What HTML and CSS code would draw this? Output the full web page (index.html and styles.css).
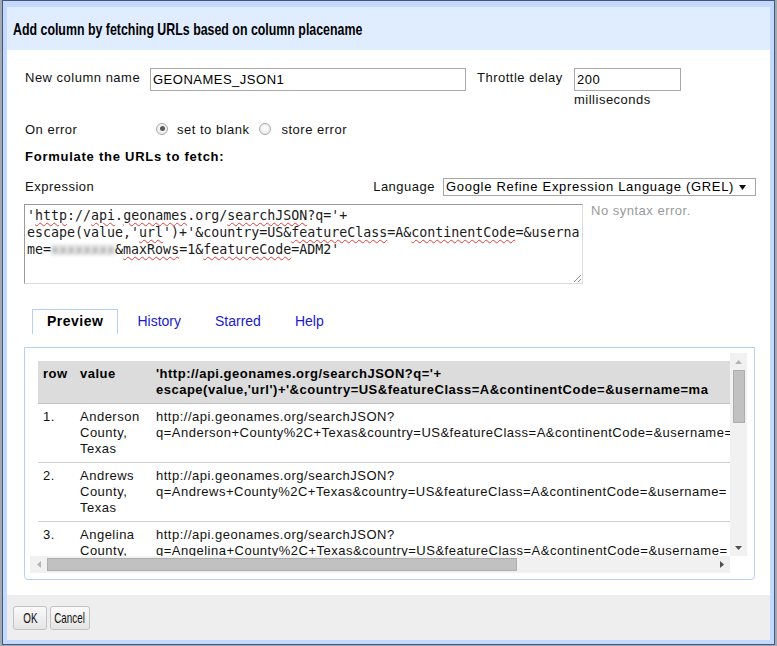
FILE: index.html
```html
<!DOCTYPE html>
<html>
<head>
<meta charset="utf-8">
<title>Add column by fetching URLs</title>
<link rel="stylesheet" href="styles.css">
</head>
<body>
<div class="dialog">
  <div class="dlg-header"><span class="dlg-title">Add column by fetching URLs based on column placename</span></div>
  <div class="dlg-body">
    <div class="row row-name">
      <label class="lbl lbl-name">New column name</label>
      <input class="txt txt-name" value="GEONAMES_JSON1">
      <label class="lbl lbl-throttle">Throttle delay</label>
      <div class="throttle">
        <input class="txt txt-throttle" value="200">
        <div class="ms">milliseconds</div>
      </div>
    </div>
    <div class="row row-error">
      <span class="lbl lbl-error">On error</span>
      <span class="radio checked"></span><span class="radio-lbl">set to blank</span>
      <span class="radio radio-2"></span><span class="radio-lbl radio-lbl-2">store error</span>
    </div>
    <div class="row heading">Formulate the URLs to fetch:</div>
    <div class="row row-lang">
      <span class="lbl">Expression</span>
      <div class="lang">
        <span class="lbl lbl-lang">Language</span>
        <div class="select"><span>Google Refine Expression Language (GREL)</span><svg class="sel-arrow" width="7" height="5" viewBox="0 0 7 5"><polygon points="0,0 7,0 3.5,5" fill="#111"/></svg></div>
      </div>
    </div>
    <div class="row-expr">
      <div class="expr"><div class="expr-line">'<span class="sp">http</span>://<span class="sp">api</span>.<span class="sp">geonames</span>.org/<span class="sp">searchJSON</span>?q='+</div><div class="expr-line">escape(value,'<span class="sp">url</span>')+'&amp;country=US&amp;<span class="sp">featureClass</span>=A&amp;<span class="sp">continentCode</span>=&amp;userna</div><div class="expr-line">me=<span class="blur">xxxxxxxx</span>&amp;<span class="sp">maxRows</span>=1&amp;<span class="sp">featureCode</span>=ADM2'</div><svg class="grip" width="10" height="10" viewBox="0 0 10 10"><path d="M9 2L2 9M9 6L6 9" stroke="#909090" stroke-width="1" fill="none"/></svg></div>
      <div class="status">No syntax error.</div>
    </div>
    <div class="tabs">
      <span class="tab active">Preview</span>
      <span class="tab">History</span>
      <span class="tab">Starred</span>
      <span class="tab">Help</span>
    </div>
    <div class="panel">
      <div class="scroller">
        <div class="viewport">
          <table class="grid">
            <thead>
              <tr><th class="c-row">row</th><th class="c-val">value</th><th class="c-expr">'http://api.geonames.org/searchJSON?q='+<br>escape(value,'url')+'&amp;country=US&amp;featureClass=A&amp;continentCode=&amp;username=ma</th></tr>
            </thead>
            <tbody>
              <tr><td>1.</td><td>Anderson<br>County,<br>Texas</td><td>http://api.geonames.org/searchJSON?<br>q=Anderson+County%2C+Texas&amp;country=US&amp;featureClass=A&amp;continentCode=&amp;username=</td></tr>
              <tr><td>2.</td><td>Andrews<br>County,<br>Texas</td><td>http://api.geonames.org/searchJSON?<br>q=Andrews+County%2C+Texas&amp;country=US&amp;featureClass=A&amp;continentCode=&amp;username=</td></tr>
              <tr><td>3.</td><td>Angelina<br>County,<br>Texas</td><td>http://api.geonames.org/searchJSON?<br>q=Angelina+County%2C+Texas&amp;country=US&amp;featureClass=A&amp;continentCode=&amp;username=</td></tr>
            </tbody>
          </table>
        </div>
        <div class="vbar">
          <div class="arrow-box"><svg width="7" height="4" viewBox="0 0 7 4"><polygon points="0,4 7,4 3.5,0" fill="#b4b4b4"/></svg></div>
          <div class="vthumb"></div>
          <div class="bar-fill"></div>
          <div class="arrow-box"><svg width="7" height="4" viewBox="0 0 7 4"><polygon points="0,0 7,0 3.5,4" fill="#505050"/></svg></div>
        </div>
        <div class="hbar">
          <div class="arrow-box"><svg width="4" height="7" viewBox="0 0 4 7"><polygon points="4,0 4,7 0,3.5" fill="#b4b4b4"/></svg></div>
          <div class="hthumb"></div>
          <div class="bar-fill"></div>
          <div class="arrow-box"><svg width="4" height="7" viewBox="0 0 4 7"><polygon points="0,0 0,7 4,3.5" fill="#505050"/></svg></div>
        </div>
        <div class="corner"></div>
      </div>
    </div>
  </div>
  <div class="dlg-footer">
    <button class="btn btn-ok"><span class="btn-txt">OK</span></button>
    <button class="btn btn-cancel"><span class="btn-txt">Cancel</span></button>
  </div>
</div>
</body>
</html>
```

FILE: styles.css
```css
html, body {
  margin: 0;
  padding: 0;
}
body {
  background: #a4aab4;
  width: 777px;
  height: 646px;
  overflow: hidden;
  font-family: "Liberation Sans", Arial, sans-serif;
  font-size: 13px;
  color: #111;
}
.dialog {
  box-sizing: border-box;
  margin-left: 2px;
  width: 773px;
  height: 645px;
  border: 1px solid #44587a;
  background: #c3d9ff;
  padding: 6px 4px 4px 4px;
  display: flex;
  flex-direction: column;
}
.dlg-header {
  height: 43px;
  flex: none;
  background: #e0ecff;
  display: flex;
  align-items: center;
  padding-left: 6px;
}
.dlg-title {
  display: inline-block;
  white-space: nowrap;
  font-size: 16.5px;
  font-weight: bold;
  color: #000;
  line-height: 16px;
  transform: scaleX(0.75);
  transform-origin: left center;
}
.dlg-body {
  flex: 1;
  background: #fff;
  padding: 18px 14px 0 17px;
  letter-spacing: 0.5px;
  line-height: 16px;
}
.row {
  display: flex;
  padding-left: 1px;
}
.row-name {
  align-items: flex-start;
}
.lbl {
  white-space: nowrap;
}
.lbl-name {
  width: 125px;
  padding-top: 2px;
}
.lbl-throttle {
  width: 97px;
  margin-left: 11px;
  padding-top: 2px;
}
.txt {
  box-sizing: border-box;
  height: 23px;
  border: 1px solid #a9a9a9;
  padding: 0 2px;
  margin: 0;
  font-family: "Liberation Sans", Arial, sans-serif;
  font-size: 13px;
  letter-spacing: 0.5px;
  color: #000;
  background: #fff;
  outline: none;
}
.txt-name {
  width: 316px;
}
.txt-throttle {
  width: 107px;
  display: block;
}
.ms {
  line-height: 16px;
  margin-top: 1px;
}
.row-error {
  margin-top: 14px;
  align-items: center;
  height: 16px;
}
.lbl-error {
  width: 131px;
}
.radio {
  box-sizing: border-box;
  width: 12px;
  height: 12px;
  border-radius: 50%;
  border: 1px solid #a8a8a8;
  background: radial-gradient(circle at 50% 40%, #ffffff 0%, #e4e4e4 100%);
  margin-right: 9px;
  margin-top: -3px;
  position: relative;
  flex: none;
}
.radio.checked::after {
  content: "";
  position: absolute;
  left: 2.5px;
  top: 2.5px;
  width: 5px;
  height: 5px;
  border-radius: 50%;
  background: #5a5a5a;
}
.radio-2 {
  margin-left: 9px;
  margin-right: 11px;
}
.heading {
  margin-top: 11px;
  font-weight: bold;
  letter-spacing: 0.75px;
  color: #000;
}
.row-lang {
  margin-top: 13px;
  justify-content: space-between;
  align-items: center;
  height: 18px;
}
.lang {
  display: flex;
  align-items: center;
}
.lbl-lang {
  margin-right: 8px;
}
.select {
  box-sizing: border-box;
  width: 313px;
  height: 18px;
  border: 1px solid #a6a6a6;
  display: flex;
  align-items: center;
  padding-left: 2px;
  color: #000;
  white-space: nowrap;
  letter-spacing: 0.7px;
}
.sel-arrow {
  margin-left: auto;
  margin-right: 9px;
}
.row-expr {
  display: flex;
  margin-top: 8px;
}
.expr {
  box-sizing: border-box;
  position: relative;
  width: 559px;
  height: 80px;
  border: 1px solid;
  border-color: #9a9a9a #dcdcdc #dcdcdc #9a9a9a;
  padding: 2px 2px;
  font-family: "DejaVu Sans Mono", "Liberation Mono", monospace;
  font-size: 13.3px;
  letter-spacing: 0;
  line-height: 17px;
  color: #1a1a1a;
  overflow: hidden;
  background: #fff;
}
.expr-line {
  white-space: pre;
}
.sp {
  text-decoration: underline wavy #e43b3b;
  text-decoration-thickness: 1px;
  text-underline-offset: 2px;
}
.blur {
  color: transparent;
  text-shadow: 0 0 4px rgba(80, 80, 80, 0.95);
}
.grip {
  position: absolute;
  right: 0;
  bottom: 0;
}
.status {
  margin-left: 8px;
  margin-top: -1px;
  color: #9a9a9a;
  white-space: nowrap;
}
.tabs {
  display: flex;
  margin-top: 25px;
  margin-left: 8px;
  height: 25px;
}
.tab {
  box-sizing: border-box;
  height: 25px;
  padding: 0 14px;
  border: 1px solid transparent;
  border-bottom: none;
  margin-right: 4px;
  line-height: 23px;
  font-size: 14px;
  letter-spacing: 0;
  color: #1a1acc;
  white-space: nowrap;
}
.tab.active {
  border-color: #b8cff5;
  font-weight: bold;
  letter-spacing: 0.5px;
  color: #000;
}
.panel {
  box-sizing: border-box;
  margin-top: 13px;
  width: 731px;
  border: 1px solid #b8cff5;
  border-radius: 0 0 4px 4px;
  padding: 5px 7px 6px 5px;
}
.scroller {
  display: grid;
  grid-template-columns: 700px 17px;
  grid-template-rows: 203px 17px;
}
.viewport {
  overflow: hidden;
  padding: 8px 0 0 8px;
}
.grid {
  border-collapse: collapse;
  width: max-content;
}
.grid th,
.grid td {
  white-space: nowrap;
  vertical-align: top;
  text-align: left;
  padding: 5px;
  line-height: 16px;
}
.grid th {
  background: #dcdcdc;
  border-bottom: 1px solid #c4c4c4;
  font-weight: bold;
  color: #000;
}
.grid td {
  border-bottom: 1px solid #cfcfcf;
  color: #111;
}
.c-row {
  width: 27px;
}
.c-val {
  width: 66px;
}
.vbar {
  background: #f1f1f1;
  display: flex;
  flex-direction: column;
}
.hbar {
  background: #f1f1f1;
  display: flex;
}
.arrow-box {
  flex: none;
  width: 17px;
  height: 17px;
  display: flex;
  align-items: center;
  justify-content: center;
}
.bar-fill {
  flex: 1;
}
.vthumb {
  flex: none;
  box-sizing: border-box;
  height: 53px;
  margin: 0 2px 0 3px;
  background: #c1c1c1;
  border: 1px solid #adadad;
}
.hthumb {
  flex: none;
  box-sizing: border-box;
  width: 470px;
  margin: 2px 0 2px 0;
  background: #c1c1c1;
  border: 1px solid #adadad;
}
.corner {
  background: #fff;
}
.dlg-footer {
  height: 45px;
  flex: none;
  background: #eeeeee;
  display: flex;
  align-items: flex-start;
  padding: 11px 0 0 6px;
  box-sizing: border-box;
}
.btn {
  box-sizing: border-box;
  height: 24px;
  margin: 0 3px 0 0;
  padding: 0;
  border: 1px solid #c2c2c2;
  border-radius: 3px;
  background: linear-gradient(#fafafa, #e4e4e4);
  display: flex;
  align-items: center;
  justify-content: center;
  font-family: "Liberation Sans", Arial, sans-serif;
  font-size: 14.5px;
  color: #111;
  overflow: visible;
}
.btn-ok {
  width: 34px;
}
.btn-cancel {
  width: 40px;
}
.btn-txt {
  display: inline-block;
  white-space: nowrap;
  transform: scaleX(0.68);
  transform-origin: center center;
}
```
